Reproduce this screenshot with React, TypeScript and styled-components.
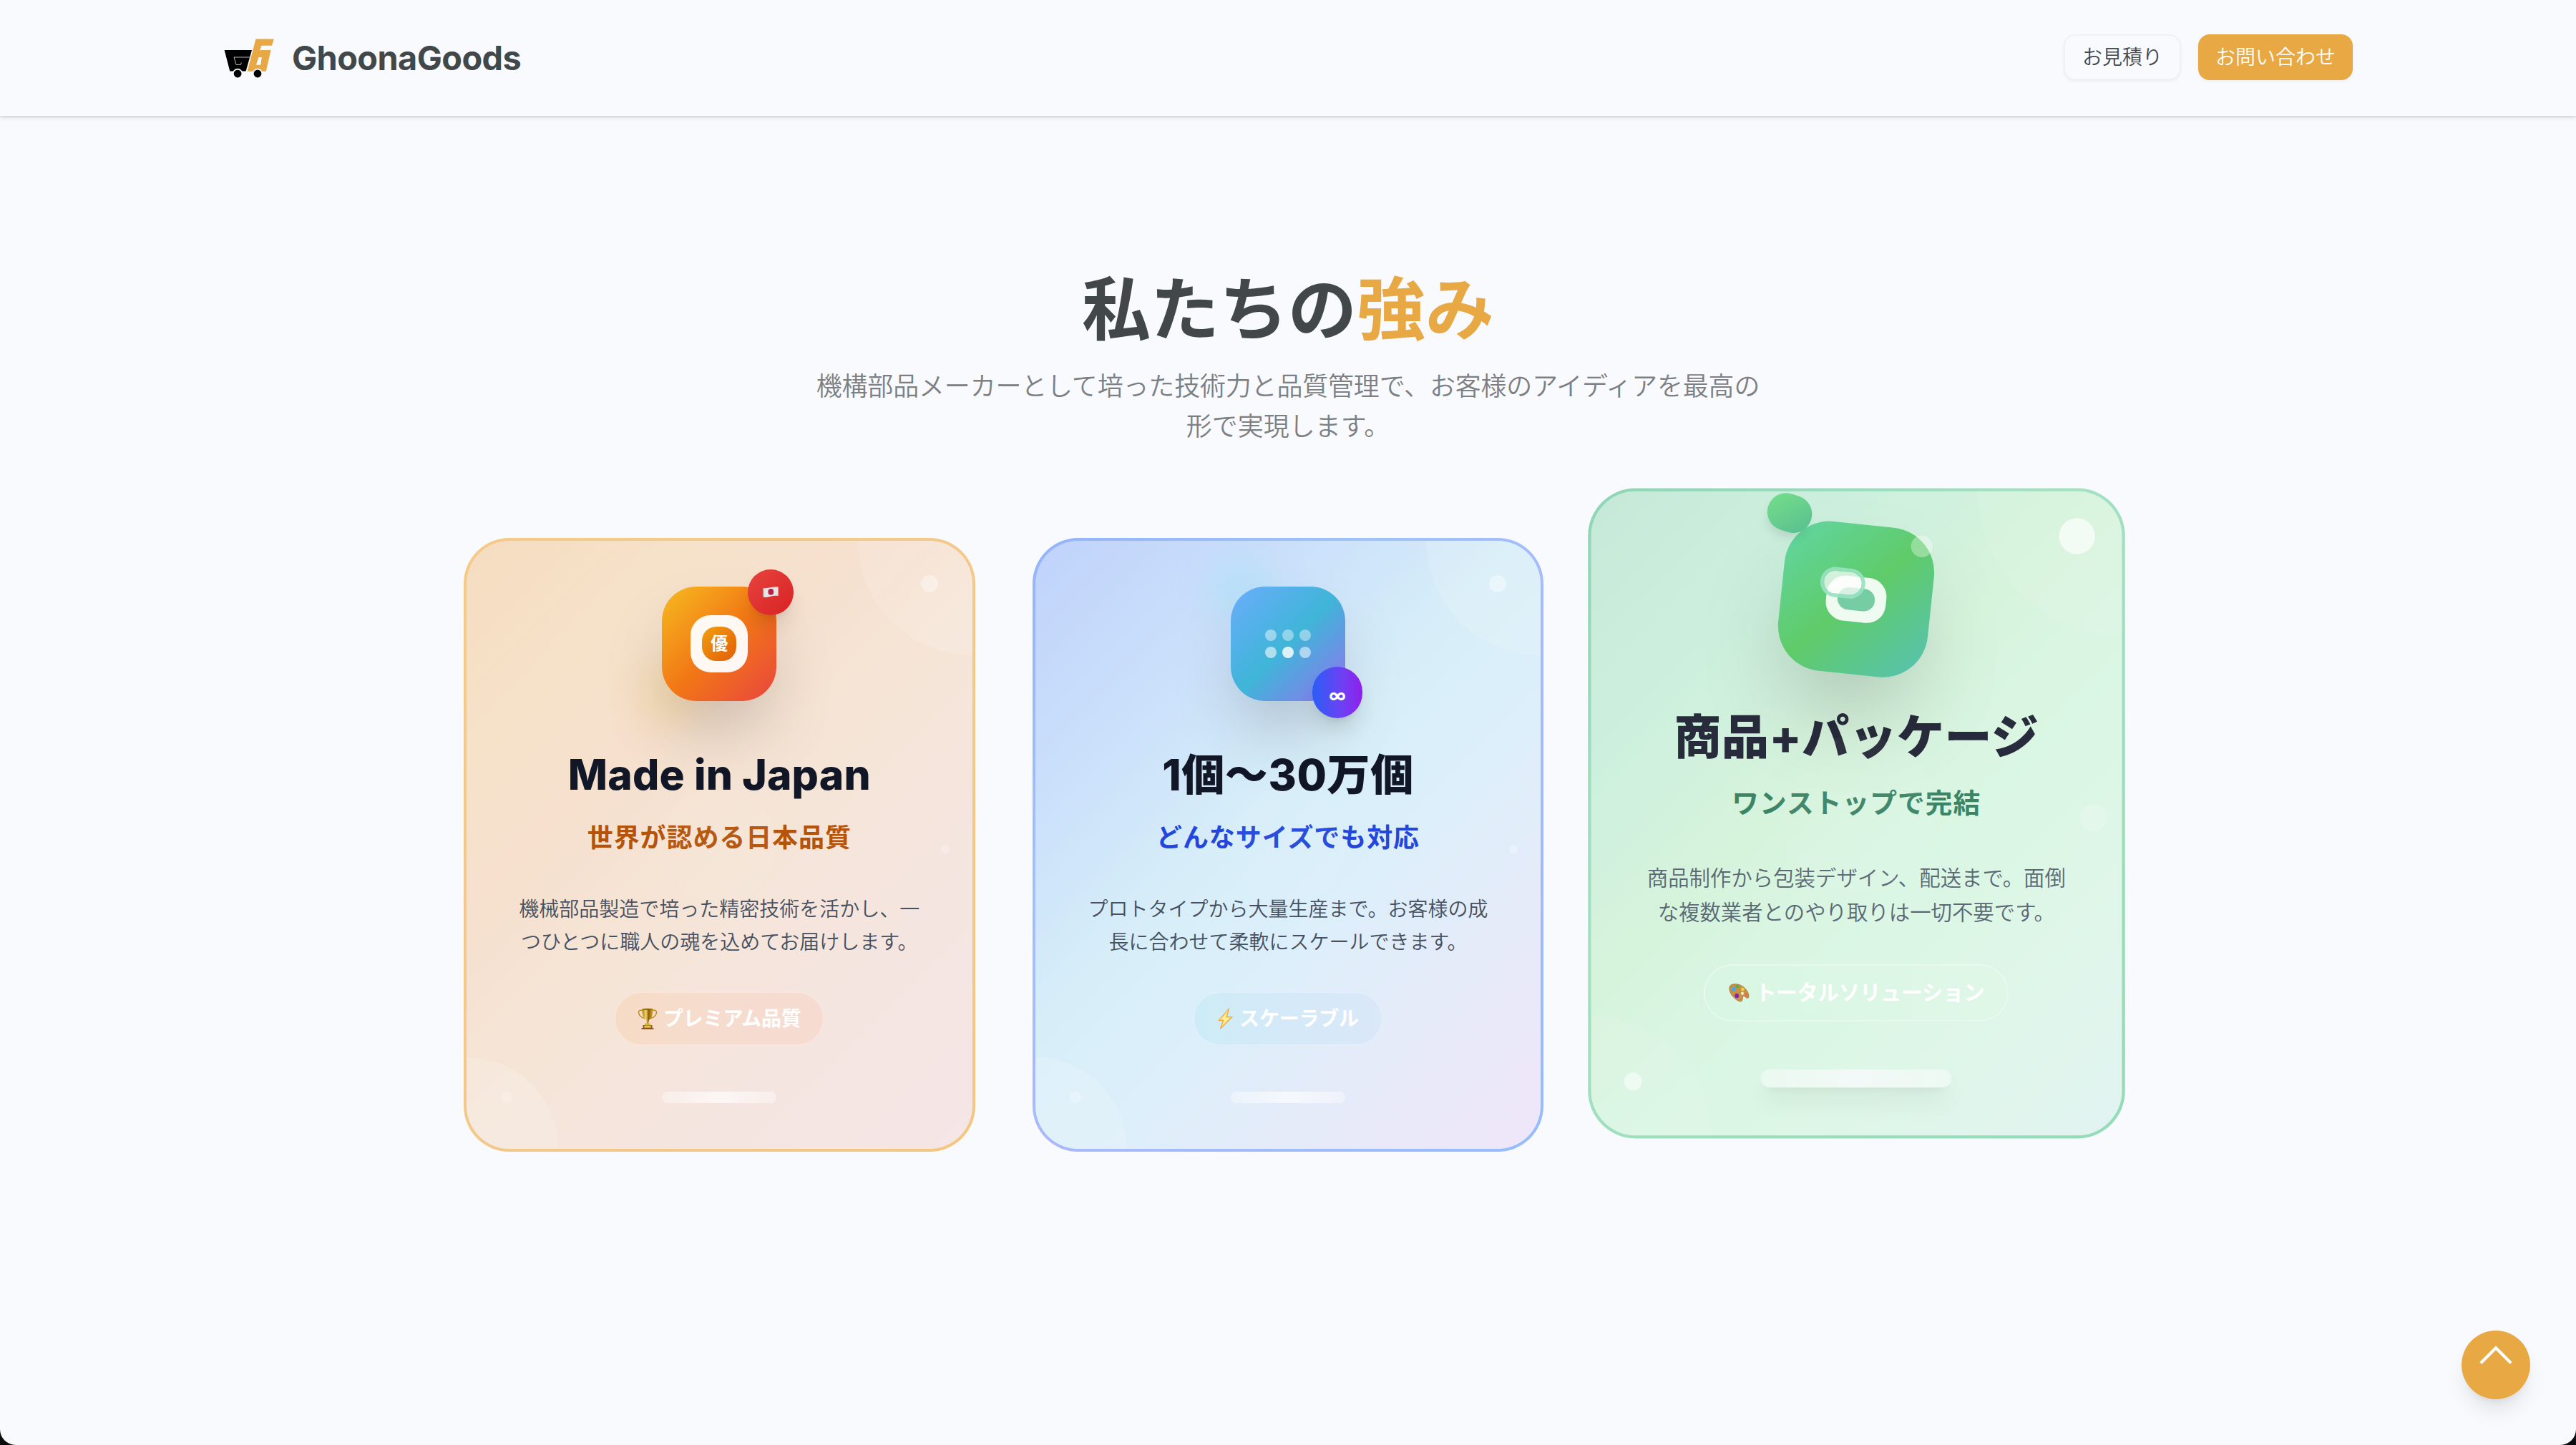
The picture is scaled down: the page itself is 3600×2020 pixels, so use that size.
import React from "react";
import styled, { createGlobalStyle, css } from "styled-components";

const FONT = `Inter, "Noto Sans CJK JP", sans-serif`;

const GlobalStyle = createGlobalStyle`
  *, *::before, *::after { box-sizing: border-box; }
  html, body { margin: 0; padding: 0; background: #0b0c0c; }
  body { font-family: ${FONT}; -webkit-font-smoothing: antialiased; }
  h1, h2, h3, p { margin: 0; }
`;

const Page = styled.div`
  position: relative;
  width: 3600px;
  height: 2020px;
  overflow: hidden;
  background: #f8fafd;
  border-radius: 0 0 22px 22px;
  font-family: ${FONT};
`;

/* ---------- header ---------- */

const Header = styled.header`
  height: 162px;
  background: #f9fafe;
  box-shadow: 0 2px 6px rgba(0, 0, 0, 0.12), 0 1px 3px rgba(0, 0, 0, 0.1);
`;

const HeaderInner = styled.div`
  width: 2976px;
  height: 160px;
  margin: 0 auto;
  display: flex;
  align-items: flex-start;
  justify-content: space-between;
`;

const Brand = styled.a`
  display: flex;
  align-items: center;
  gap: 24px;
  height: 162px;
`;

const BrandName = styled.span`
  font-size: 46.8px;
  font-weight: 700;
  letter-spacing: -0.55px;
  line-height: 64px;
  color: #42484a;
`;

const NavActions = styled.div`
  display: flex;
  gap: 24px;
  padding-top: 48px;
`;

const NavButton = styled.button<{ $primary?: boolean }>`
  height: 64px;
  padding: 0 ${(p) => (p.$primary ? 24 : 22)}px;
  border: ${(p) => (p.$primary ? "0" : "2px solid #f0f1f3")};
  border-radius: 16px;
  background: ${(p) => (p.$primary ? "#e8a844" : "#f9fafe")};
  color: ${(p) => (p.$primary ? "#fffdf8" : "#43494c")};
  font: 350 28px/40px ${FONT};
  letter-spacing: 0;
  white-space: nowrap;
  width: ${(p) => (p.$primary ? 216 : 164)}px;
  box-shadow: 0 2px 4px rgba(0, 0, 0, 0.05);
`;

/* ---------- section ---------- */

const Section = styled.section`
  width: 2304px;
  margin: 0 auto;
  padding-top: 222px;
  display: flex;
  flex-direction: column;
  align-items: center;
`;

const Heading = styled.h2`
  font-size: 96px;
  line-height: 96px;
  font-weight: 700;
  color: #42484a;
  em {
    font-style: normal;
    color: #e8a844;
  }
`;

const Lead = styled.p`
  margin-top: 32px;
  font-size: 36px;
  line-height: 56px;
  font-weight: 350;
  color: #7d8083;
  text-align: center;
  white-space: nowrap;
`;

const LeadLine = styled.span<{ $tight?: boolean }>`
  display: block;
  letter-spacing: ${(p) => (p.$tight ? "-0.18px" : "0")};
`;

const Grid = styled.div`
  width: 100%;
  margin-top: 128px;
  display: grid;
  grid-template-columns: repeat(3, minmax(0, 1fr));
  gap: 80px;
  align-items: start;
`;

type Theme = {
  border: string;
  fill: string;
  subtitle: string;
  pill: string;
};

const themes: Record<string, Theme> = {
  amber: {
    border: "linear-gradient(135deg, #f6ca86, #f3c88a 50%, #f5c680)",
    fill: "linear-gradient(135deg, #f6dcc0 0%, #f5e2c9 20%, #f6e0ce 34%, #f5e5d7 52%, #f5e5df 70%, #f5e6e7 100%)",
    subtitle: "#b45309",
    pill: "linear-gradient(90deg, #f6dcc6, #f6dccf 50%, #f6dbd2)",
  },
  blue: {
    border: "linear-gradient(135deg, #93b4fd, #9fc2fb 30%, #a9b9fb 55%, #94bdfd)",
    fill: "linear-gradient(135deg, #c0d2fb 0%, #cbe0fb 24%, #d7eef8 44%, #dbeffa 58%, #e5ebf9 76%, #efe6f9 100%)",
    subtitle: "#2346dd",
    pill: "linear-gradient(90deg, #cdecf6, #d5e9f8 50%, #dae8f9)",
  },
  green: {
    border: "linear-gradient(135deg, #8fd6b4, #a3e1c1 40%, #93dcb7)",
    fill: "linear-gradient(135deg, #c5e8d8 0%, #cdf0de 24%, #d6f3dc 42%, #daf6e3 56%, #def6e8 76%, #e2f3f1 100%)",
    subtitle: "#3b8566",
    pill: "linear-gradient(90deg, #d9f6e3, #dff7e8)",
  },
};

const Card = styled.article<{ $theme: Theme; $raised?: boolean }>`
  position: relative;
  overflow: hidden;
  display: flex;
  flex-direction: column;
  align-items: center;
  padding: 64px;
  border: 4px solid transparent;
  border-radius: 64px;
  background: ${(p) => p.$theme.fill} padding-box, ${(p) => p.$theme.border} border-box;
  ${(p) =>
    p.$raised &&
    css`
      transform: translateY(-48px) scale(1.05);
    `}
`;

/* translucent ornament floating over the card, placed by its centre */
const Orb = styled.span<{ $x: string; $y: string; $size: number; $alpha: number }>`
  position: absolute;
  left: ${(p) => p.$x};
  top: ${(p) => p.$y};
  width: ${(p) => p.$size}px;
  height: ${(p) => p.$size}px;
  margin: ${(p) => -p.$size / 2}px 0 0 ${(p) => -p.$size / 2}px;
  border-radius: 50%;
  background: rgba(255, 255, 255, ${(p) => p.$alpha});
`;

const IconWrap = styled.div`
  position: relative;
  width: 160px;
  height: 160px;
  margin-bottom: 64px;
`;

const Glow = styled.span<{ $x: number; $y: number; $color: string }>`
  position: absolute;
  left: ${(p) => p.$x - 45}px;
  top: ${(p) => p.$y - 45}px;
  width: 90px;
  height: 90px;
  border-radius: 50%;
  background: ${(p) => p.$color};
  filter: blur(24px);
`;

const IconTile = styled.div<{ $bg: string; $turned?: boolean }>`
  position: relative;
  width: 160px;
  height: 160px;
  border-radius: 48px;
  background: ${(p) => p.$bg};
  box-shadow: 0 50px 100px -24px rgba(0, 0, 0, 0.25);
  display: flex;
  align-items: center;
  justify-content: center;
  ${(p) =>
    p.$turned &&
    css`
      transform: rotate(6deg) scale(1.25);
    `}
`;

const SealOuter = styled.div`
  width: 80px;
  height: 80px;
  border-radius: 28px;
  background: rgba(255, 255, 255, 0.95);
  display: flex;
  align-items: center;
  justify-content: center;
`;

const SealInner = styled.div`
  width: 48px;
  height: 48px;
  border-radius: 20px;
  background: linear-gradient(135deg, #f0a010, #e35c07);
  color: #fff;
  font-size: 24px;
  line-height: 48px;
  font-weight: 700;
  text-align: center;
`;

const CornerBadge = styled.div<{ $bg: string; $low?: boolean }>`
  position: absolute;
  right: -24px;
  ${(p) => (p.$low ? "bottom: -24px; width: 70px; height: 72px;" : "top: -24px; width: 64px; height: 64px;")}
  border-radius: 36px;
  background: ${(p) => p.$bg};
  box-shadow: 0 20px 30px -6px rgba(0, 0, 0, 0.12), 0 8px 12px -8px rgba(0, 0, 0, 0.12);
  display: flex;
  align-items: center;
  justify-content: center;
  color: #fff;
`;

const Infinity = styled.span`
  font-size: 24px;
  line-height: 32px;
  font-weight: 700;
  padding-top: 9px;
`;

const DotGrid = styled.div`
  display: grid;
  grid-template-columns: repeat(3, 16px);
  gap: 8px;
`;

const Dot = styled.span<{ $alpha: number }>`
  width: 16px;
  height: 16px;
  border-radius: 50%;
  background: rgba(255, 255, 255, ${(p) => p.$alpha});
`;

const Box = styled.div`
  position: relative;
  width: 64px;
  height: 48px;
  border-radius: 20px;
  background: rgba(255, 255, 255, 0.9);
  display: flex;
  align-items: center;
  justify-content: center;
`;

const BoxCore = styled.div`
  width: 40px;
  height: 24px;
  border-radius: 12px;
  background: #76cca3;
`;

const BoxLid = styled.div`
  position: absolute;
  left: -8px;
  top: -8px;
  width: 48px;
  height: 32px;
  border-radius: 16px;
  border: 4px solid rgba(152, 226, 192, 0.92);
  background: rgba(255, 255, 255, 0.72);
  background-clip: padding-box;
`;

const Tag = styled.div`
  position: absolute;
  left: -24px;
  top: -24px;
  width: 48px;
  height: 40px;
  border-radius: 20px;
  transform: rotate(12deg);
  background: linear-gradient(135deg, #76e08a, #56bd90);
  box-shadow: 0 8px 12px -4px rgba(0, 0, 0, 0.12);
`;

const Title = styled.h3<{ $size: number; $track: number; $dim?: boolean }>`
  font-size: ${(p) => p.$size}px;
  line-height: 78px;
  font-weight: 800;
  letter-spacing: ${(p) => p.$track}px;
  color: ${(p) => (p.$dim ? "#272b3b" : "#111726")};
  white-space: nowrap;
`;

const Subtitle = styled.p<{ $color: string }>`
  margin-top: 21px;
  font-size: 36px;
  line-height: 56px;
  font-weight: 700;
  letter-spacing: 0.9px;
  color: ${(p) => p.$color};
  white-space: nowrap;
`;

const Description = styled.p<{ $dim?: boolean }>`
  margin-top: 49px;
  font-size: 28px;
  line-height: 46px;
  font-weight: 350;
  color: ${(p) => (p.$dim ? "#5a6873" : "#465060")};
  text-align: center;
  white-space: nowrap;
`;

const Pill = styled.div<{ $bg: string; $width: number }>`
  margin-top: 46px;
  width: ${(p) => p.$width}px;
  height: 76px;
  border: 2px solid rgba(255, 255, 255, 0.3);
  border-radius: 38px;
  background: ${(p) => p.$bg};
  display: flex;
  align-items: center;
  justify-content: center;
  gap: 8px;
  color: #fff;
  font-size: 28px;
  line-height: 40px;
  font-weight: 700;
  letter-spacing: -0.2px;
  white-space: nowrap;
  svg {
    flex: none;
    display: block;
  }
`;

const Bar = styled.div<{ $wide?: boolean }>`
  margin-top: 64px;
  width: ${(p) => (p.$wide ? 254 : 160)}px;
  height: ${(p) => (p.$wide ? 24 : 16)}px;
  border-radius: ${(p) => (p.$wide ? 12 : 8)}px;
  background: ${(p) =>
    p.$wide
      ? "linear-gradient(90deg, rgba(255,255,255,.42), rgba(246,249,250,.85) 50%, rgba(255,255,255,.42))"
      : "linear-gradient(90deg, rgba(255,255,255,.35), rgba(255,255,255,.66) 50%, rgba(255,255,255,.35))"};
  box-shadow: ${(p) => (p.$wide ? "0 20px 30px -6px rgba(0,0,0,.1), 0 8px 12px -8px rgba(0,0,0,.1)" : "none")};
`;

const TopButton = styled.button`
  position: absolute;
  right: 64px;
  bottom: 64px;
  width: 96px;
  height: 96px;
  padding: 0;
  border: 0;
  border-radius: 50%;
  background: #e8a844;
  box-shadow: 0 20px 30px -6px rgba(0, 0, 0, 0.1), 0 8px 12px -8px rgba(0, 0, 0, 0.1);
  svg {
    display: block;
  }
`;

/* ---------- drawings ---------- */

const Logo = () => (
  <svg width="72" height="72" viewBox="312 45 72 72">
    <path d="M313.6 70H352l-8.4 29.6h-22.3z" fill="#000" />
    <path d="M350 80h-23l3 10.4h6.6l.6-3" fill="none" stroke="#c9cbd0" strokeWidth="0.9" />
    <path
      fillRule="evenodd"
      fill="#e8a844"
      d="M357.5 54.4h25.3l-2.8 9.4h-14.6l-2.3 6.8 2.4-.6h13.1l-6.8 29.8h-26.2zM361.6 80l-3.7 10.8h6.3l1.6-10.8z"
    />
    <circle cx="332.1" cy="103" r="7.2" fill="#f9fafe" />
    <circle cx="360" cy="103" r="7.2" fill="#f9fafe" />
    <circle cx="332.1" cy="103" r="5.4" fill="#000" />
    <circle cx="360" cy="103" r="5.4" fill="#000" />
  </svg>
);

const Flag = () => (
  <svg width="24" height="18" viewBox="0 0 24 18">
    <path d="M1.6 3C5 3.800 9 2.600 12 2s7-.8 10.600-.4V14c-3.600-.4-7.600.1-10.600.7S5 16.600 1.600 15.600z" fill="#e4e6e6" />
    <path d="M1.600 3l1 .2v12.600l-1-.2z" fill="#aab0b0" />
    <ellipse cx="12.300" cy="8.400" rx="3.900" ry="4.300" fill="#b3264a" />
  </svg>
);

const Trophy = () => (
  <svg width="28" height="30" viewBox="0 0 28 30">
    <defs>
      <linearGradient id="cup" x1="0" x2="1">
        <stop offset="0" stopColor="#a87a10" />
        <stop offset=".35" stopColor="#f2d667" />
        <stop offset=".6" stopColor="#8a5f08" />
        <stop offset="1" stopColor="#d8ab30" />
      </linearGradient>
    </defs>
    <path d="M7 3.500C3 2.500 1 4 1.600 7c.6 3.600 4 6.500 8.400 7.500M21 3.500c4-1 6 .5 5.400 3.500-.6 3.600-4 6.500-8.400 7.500" fill="none" stroke="#b98a1c" strokeWidth="1.500" />
    <path d="M6.500 1.300h15c0 8-1.500 13-5.500 15.500l-1 5.500h-2l-1-5.500c-4-2.500-5.500-7.500-5.500-15.500z" fill="url(#cup)" />
    <ellipse cx="14" cy="1.800" rx="7.500" ry="1.100" fill="#8a640d" />
    <path d="M10.500 21.500h7l1 2.500h-9z" fill="#d9b23c" />
    <path d="M7.500 24h13v4.800h-13z" fill="#8f5f1a" />
    <path d="M9.500 24.600h9v3h-9z" fill="#ecc652" />
    <path d="M5.500 28.200h17v1.500h-17z" fill="#7c3a16" />
  </svg>
);

const Bolt = () => (
  <svg width="23" height="30" viewBox="0 0 23 30">
    <path d="M16.500 1L2 17.500h6.500L4.500 29 21 12.500h-7.500z" fill="#fbd85c" stroke="#f0a63c" strokeWidth="1.100" strokeLinejoin="round" />
    <path d="M14.500 5L6 16h4.500L7.500 24.500 17 14h-6z" fill="#fff3a8" />
  </svg>
);

const Palette = () => (
  <svg width="28" height="26" viewBox="0 0 28 26">
    <path
      d="M8 1.200C14.500.6 22 5 25.500 11.500c2 3.800 2.300 7.800.3 8.500-1.900.6-3.500-3-5.500-2.600-2.200.4-.6 3.600-2.300 6.200-1.500 2.200-7-.4-11-4.600C2.600 14.400.2 8.500 1.700 4.700 2.600 2.400 5 1.500 8 1.200z"
      fill="#c99145"
      stroke="#9b6425"
      strokeWidth=".6"
    />
    <ellipse cx="18.600" cy="13.700" rx="1.800" ry="2" fill="#eefbe9" />
    <ellipse cx="7" cy="8" rx="2.700" ry="2.700" fill="#4aa6e6" />
    <ellipse cx="12" cy="4.600" rx="2.300" ry="2.200" fill="#4db541" />
    <ellipse cx="19" cy="8.200" rx="2.200" ry="2.200" fill="#efcf45" />
    <ellipse cx="11.200" cy="16.800" rx="2.700" ry="3" fill="#7f22c4" />
    <ellipse cx="23.800" cy="15.600" rx="1.500" ry="2.600" fill="#ee6a52" />
  </svg>
);

const Chevron = () => (
  <svg width="96" height="96" viewBox="0 0 96 96">
    <path d="M26.800 45.400L48 24.200l21.200 21.200" fill="none" stroke="#fff" strokeWidth="4.200" />
  </svg>
);

/* ---------- cards ---------- */

const Ornaments = ({ large }: { large?: boolean }) => (
  <>
    <Orb $x="100%" $y="0%" $size={large ? 384 : 320} $alpha={large ? 0.08 : 0.13} />
    <Orb $x="0%" $y="100%" $size={large ? 320 : 256} $alpha={large ? 0.08 : 0.16} />
    <Orb $x="50%" $y="50%" $size={large ? 208 : 160} $alpha={0.04} />
    <Orb $x="calc(100% - 60px)" $y="60px" $size={large ? 48 : 24} $alpha={large ? 0.65 : 0.38} />
    <Orb $x="56px" $y="calc(100% - 72px)" $size={large ? 24 : 16} $alpha={large ? 0.5 : 0.26} />
    <Orb $x="calc(100% - 38px)" $y="calc(50% + 6px)" $size={large ? 36 : 12} $alpha={large ? 0.2 : 0.26} />
  </>
);

export default function App() {
  return (
    <>
      <GlobalStyle />
      <Page lang="ja">
        <Header>
          <HeaderInner>
            <Brand>
              <Logo />
              <BrandName>GhoonaGoods</BrandName>
            </Brand>
            <NavActions>
              <NavButton>お見積り</NavButton>
              <NavButton $primary>お問い合わせ</NavButton>
            </NavActions>
          </HeaderInner>
        </Header>

        <Section>
          <Heading>
            私たちの<em>強み</em>
          </Heading>
          <Lead>
            <LeadLine $tight>機構部品メーカーとして培った技術力と品質管理で、お客様のアイディアを最高の</LeadLine>
            <LeadLine>形で実現します。</LeadLine>
          </Lead>

          <Grid>
            <Card $theme={themes.amber}>
              <Ornaments />
              <IconWrap>
                <Glow $x={10} $y={150} $color="rgba(250, 204, 80, .2)" />
                <IconTile $bg="linear-gradient(135deg, #f6bb20, #f27815 50%, #e9453f)">
                  <SealOuter>
                    <SealInner>優</SealInner>
                  </SealOuter>
                </IconTile>
                <CornerBadge $bg="linear-gradient(135deg, #e8443f, #d62222)">
                  <Flag />
                </CornerBadge>
              </IconWrap>
              <Title $size={58.6} $track={0.2}>
                Made in Japan
              </Title>
              <Subtitle $color={themes.amber.subtitle}>世界が認める日本品質</Subtitle>
              <Description>
                機械部品製造で培った精密技術を活かし、一
                <br />
                つひとつに職人の魂を込めてお届けします。
              </Description>
              <Pill $bg={themes.amber.pill} $width={294}>
                <Trophy />
                プレミアム品質
              </Pill>
              <Bar />
            </Card>

            <Card $theme={themes.blue}>
              <Ornaments />
              <IconWrap>
                <Glow $x={14} $y={4} $color="rgba(165, 226, 246, .45)" />
                <IconTile $bg="linear-gradient(135deg, #6aadfb, #3fb5d8 50%, #9570f0)">
                  <DotGrid>
                    {[0.46, 0.42, 0.42, 0.58, 0.82, 0.54].map((a, i) => (
                      <Dot key={i} $alpha={a} />
                    ))}
                  </DotGrid>
                </IconTile>
                <CornerBadge $low $bg="linear-gradient(90deg, #2a5ef6, #6f40f4 60%, #8f20ea)">
                  <Infinity>∞</Infinity>
                </CornerBadge>
              </IconWrap>
              <Title $size={60} $track={0.6}>
                1個〜30万個
              </Title>
              <Subtitle $color={themes.blue.subtitle}>どんなサイズでも対応</Subtitle>
              <Description>
                プロトタイプから大量生産まで。お客様の成
                <br />
                長に合わせて柔軟にスケールできます。
              </Description>
              <Pill $bg={themes.blue.pill} $width={266}>
                <Bolt />
                スケーラブル
              </Pill>
              <Bar />
            </Card>

            <Card $theme={themes.green} $raised>
              <Ornaments large />
              <IconWrap>
                <IconTile $turned $bg="linear-gradient(135deg, #62d6a4, #5fcb69 50%, #57c2b4)">
                  <Box>
                    <BoxCore />
                    <BoxLid />
                  </Box>
                  <Tag />
                </IconTile>
                <Orb $x="167px" $y="9px" $size={29} $alpha={0.34} />
              </IconWrap>
              <Title $size={63} $track={0.3} $dim>
                商品+パッケージ
              </Title>
              <Subtitle $color={themes.green.subtitle}>ワンストップで完結</Subtitle>
              <Description $dim>
                商品制作から包装デザイン、配送まで。面倒
                <br />
                な複数業者とのやり取りは一切不要です。
              </Description>
              <Pill $bg={themes.green.pill} $width={406}>
                <Palette />
                トータルソリューション
              </Pill>
              <Bar $wide />
            </Card>
          </Grid>
        </Section>

        <TopButton aria-label="ページ上部へ戻る">
          <Chevron />
        </TopButton>
      </Page>
    </>
  );
}
